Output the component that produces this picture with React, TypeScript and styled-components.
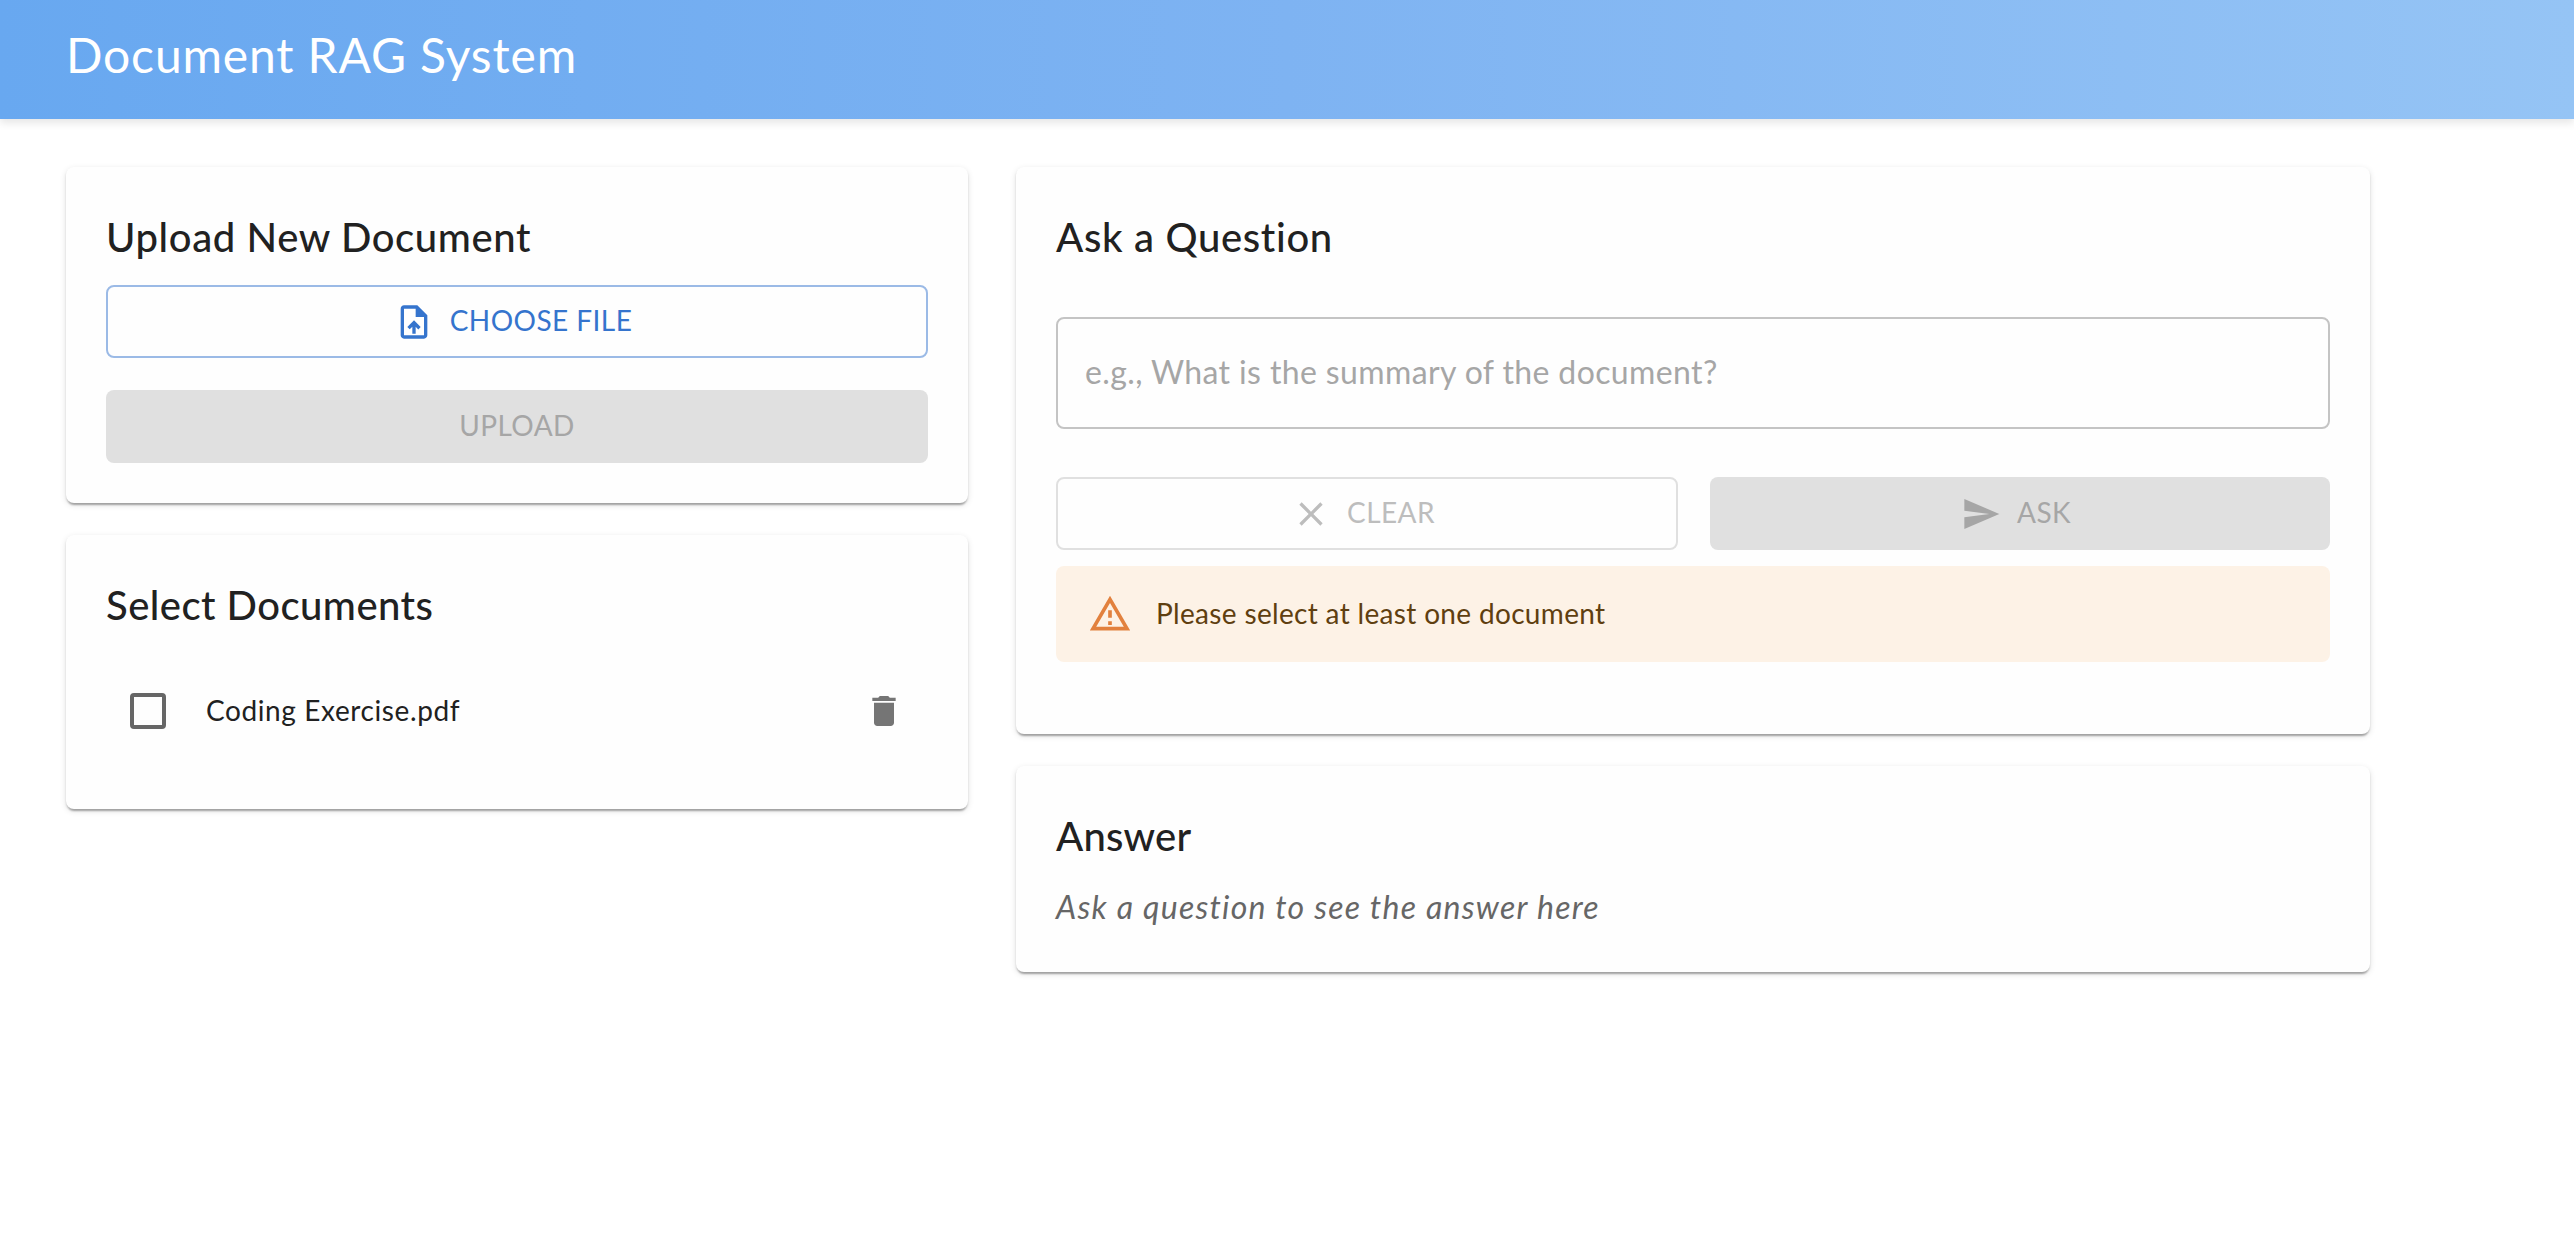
import React, { useState } from "react";
import styled, { createGlobalStyle, css } from "styled-components";

const GlobalStyle = createGlobalStyle`
  *, *::before, *::after { box-sizing: border-box; }
  body {
    margin: 0;
    background: #fff;
    color: #212121;
    font-family: Lato, "Open Sans", sans-serif;
  }
  h1, h2, p { margin: 0; }
`;

const Page = styled.div`
  min-height: 1260px;
`;

const Header = styled.header`
  height: 119px;
  padding: 26px 66px 0;
  background: linear-gradient(90deg, #68a8f0 0%, #7eb3f2 50%, #95c4f5 100%);
  box-shadow: 0 4px 8px rgba(0, 0, 0, 0.1);
`;

const AppTitle = styled.h1`
  font-size: 48px;
  line-height: 58px;
  font-weight: 400;
  letter-spacing: 0.86px;
  color: #fff;
`;

const Content = styled.main`
  display: grid;
  grid-template-columns: 902px 1354px;
  gap: 48px;
  align-items: start;
  padding: 48px 66px;
`;

const Column = styled.div`
  display: flex;
  flex-direction: column;
  gap: 32px;
`;

const Card = styled.section`
  display: flex;
  flex-direction: column;
  padding: 40px;
  border-radius: 8px;
  background: #fefefe;
  box-shadow:
    0 4px 2px -2px rgba(0, 0, 0, 0.2),
    0 2px 2px rgba(0, 0, 0, 0.14),
    0 2px 6px rgba(0, 0, 0, 0.12);
`;

const CardTitle = styled.h2<{ $tracking?: number }>`
  padding-top: 2px;
  font-size: 40px;
  line-height: 57px;
  font-weight: 500;
  letter-spacing: ${(p) => p.$tracking ?? 0.62}px;
`;

const variants = {
  outlined: css`
    border: 2px solid #9bbae6;
    color: #3574cd;
  `,
  outlinedDisabled: css`
    border: 2px solid #e0e0e0;
    color: #bdbdbd;
  `,
  filledDisabled: css`
    border: 0;
    background: #e0e0e0;
    color: #a6a6a6;
  `,
};

const Button = styled.button<{ $variant: keyof typeof variants }>`
  display: flex;
  align-items: center;
  justify-content: center;
  gap: 16px;
  width: 100%;
  height: 73px;
  padding: 0;
  border-radius: 8px;
  background: transparent;
  font: 400 28px/34px Lato, "Open Sans", sans-serif;
  letter-spacing: 0.45px;
  text-transform: uppercase;
  ${(p) => variants[p.$variant]}

  svg {
    margin-left: -8px;
  }
`;

const ButtonLabel = styled.span`
  padding-bottom: 3px;
`;

const Glyph = styled.svg<{ $size: number }>`
  flex: none;
  width: ${(p) => p.$size}px;
  height: ${(p) => p.$size}px;
  fill: currentColor;
`;

const UploadActions = styled.div`
  display: flex;
  flex-direction: column;
  gap: 32px;
  margin-top: 19px;
`;

const DocumentList = styled.ul`
  margin: 37px 0 18px;
  padding: 0;
  list-style: none;
`;

const DocumentRow = styled.li`
  display: flex;
  align-items: center;
  height: 80px;
  padding: 0 24px;
`;

const Checkbox = styled.span`
  width: 36px;
  height: 36px;
  border: 4px solid #666;
  border-radius: 4px;
`;

const DocumentName = styled.span`
  flex: 1;
  margin-left: 40px;
  padding-bottom: 2px;
  font-size: 28px;
  line-height: 40px;
  letter-spacing: 0.6px;
`;

const DeleteButton = styled.button`
  display: flex;
  padding: 0;
  border: 0;
  background: transparent;
  color: #757575;
`;

const QuestionInput = styled.input`
  height: 112px;
  margin-top: 51px;
  padding: 0 27px 3px;
  border: 2px solid #c4c4c4;
  border-radius: 8px;
  background: transparent;
  font: 400 32px/46px Lato, "Open Sans", sans-serif;
  letter-spacing: 0.38px;
  color: #212121;

  &::placeholder {
    color: #a6a6a6;
    opacity: 1;
  }
`;

const QuestionActions = styled.div`
  display: flex;
  gap: 32px;
  margin-top: 48px;
`;

const Alert = styled.div`
  display: flex;
  align-items: center;
  gap: 24px;
  height: 96px;
  margin: 16px 0 32px;
  padding: 0 32px;
  border-radius: 8px;
  background: #fdf2e6;
  color: #e2813e;
`;

const AlertText = styled.span`
  padding-bottom: 2px;
  font-size: 28px;
  line-height: 40px;
  letter-spacing: 0.33px;
  color: #5f3f10;
`;

const EmptyAnswer = styled.p`
  min-height: 50px;
  margin-top: 17px;
  padding-top: 1px;
  font-size: 32px;
  line-height: 48px;
  font-style: italic;
  letter-spacing: 1.26px;
  color: #666;
`;

const icons = {
  uploadFile:
    "M14 2H6c-1.1 0-1.99.9-1.99 2L4 20c0 1.1.89 2 1.99 2H18c1.1 0 2-.9 2-2V8l-6-6zm4 18H6V4h7v5h5v11zM8 15.01l1.41 1.41L11 14.84V19h2v-4.16l1.59 1.59L16 15.01 12.01 11 8 15.01z",
  clear:
    "M19 6.41 17.59 5 12 10.59 6.41 5 5 6.41 10.59 12 5 17.59 6.41 19 12 13.41 17.59 19 19 17.59 13.41 12z",
  send: "M2.01 21 23 12 2.01 3 2 10l15 2-15 2z",
  remove:
    "M6 19c0 1.1.9 2 2 2h8c1.1 0 2-.9 2-2V7H6v12zM19 4h-3.5l-1-1h-5l-1 1H5v2h14V4z",
  warning:
    "M12 5.99 19.53 19H4.47L12 5.99M12 2 1 21h22L12 2zm1 14h-2v2h2v-2zm0-6h-2v4h2v-4z",
};

function Icon({ name, size = 40 }: { name: keyof typeof icons; size?: number }) {
  return (
    <Glyph $size={size} viewBox="0 0 24 24" aria-hidden="true">
      <path d={icons[name]} />
    </Glyph>
  );
}

const documents = ["Coding Exercise.pdf"];

export default function App() {
  const [question, setQuestion] = useState("");

  return (
    <Page>
      <GlobalStyle />
      <Header>
        <AppTitle>Document RAG System</AppTitle>
      </Header>
      <Content>
        <Column>
          <Card>
            <CardTitle>Upload New Document</CardTitle>
            <UploadActions>
              <Button $variant="outlined">
                <Icon name="uploadFile" />
                <ButtonLabel>Choose File</ButtonLabel>
              </Button>
              <Button $variant="filledDisabled" disabled>
                <ButtonLabel>Upload</ButtonLabel>
              </Button>
            </UploadActions>
          </Card>
          <Card>
            <CardTitle $tracking={0.47}>Select Documents</CardTitle>
            <DocumentList>
              {documents.map((name) => (
                <DocumentRow key={name}>
                  <Checkbox role="checkbox" aria-checked={false} />
                  <DocumentName>{name}</DocumentName>
                  <DeleteButton aria-label="Delete">
                    <Icon name="remove" />
                  </DeleteButton>
                </DocumentRow>
              ))}
            </DocumentList>
          </Card>
        </Column>
        <Column>
          <Card>
            <CardTitle $tracking={0.67}>Ask a Question</CardTitle>
            <QuestionInput
              value={question}
              onChange={(e) => setQuestion(e.target.value)}
              placeholder="e.g., What is the summary of the document?"
            />
            <QuestionActions>
              <Button $variant="outlinedDisabled" disabled>
                <Icon name="clear" />
                <ButtonLabel>Clear</ButtonLabel>
              </Button>
              <Button $variant="filledDisabled" disabled>
                <Icon name="send" />
                <ButtonLabel>Ask</ButtonLabel>
              </Button>
            </QuestionActions>
            <Alert role="alert">
              <Icon name="warning" size={44} />
              <AlertText>Please select at least one document</AlertText>
            </Alert>
          </Card>
          <Card>
            <CardTitle $tracking={0.2}>Answer</CardTitle>
            <EmptyAnswer>Ask a question to see the answer here</EmptyAnswer>
          </Card>
        </Column>
      </Content>
    </Page>
  );
}
